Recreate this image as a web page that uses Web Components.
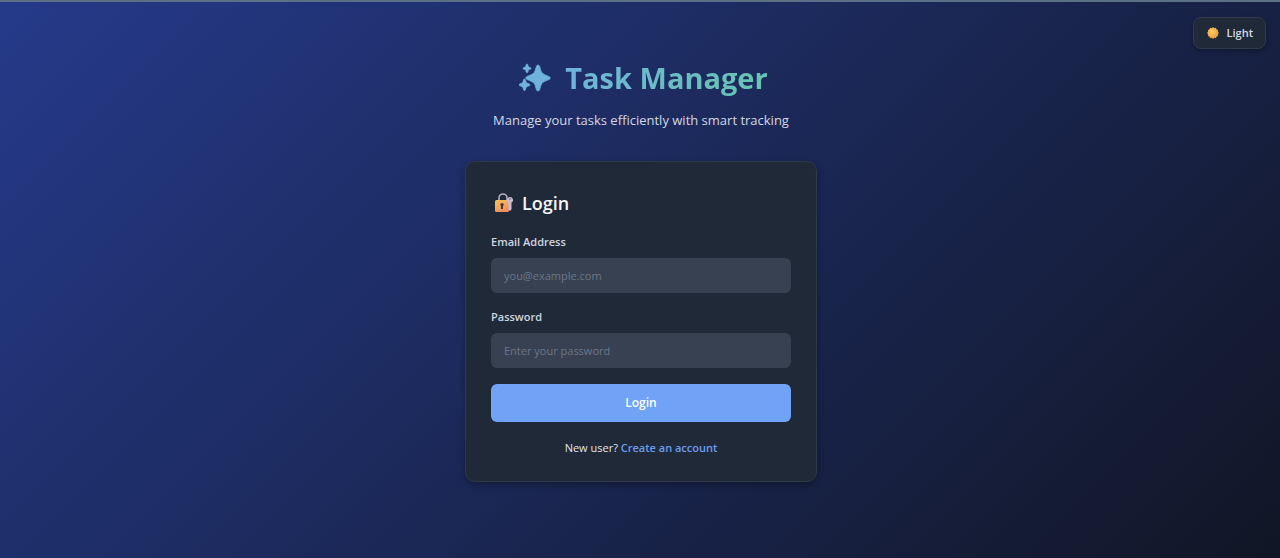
<!DOCTYPE html>
<html lang="en">
<head>
<meta charset="utf-8">
<meta name="viewport" content="width=device-width, initial-scale=1">
<title>Task Manager</title>
<style>
  body { margin: 0; font-family: "Open Sans", "Noto Sans", sans-serif; color: #e5e7eb; }
</style>
</head>
<body>
<task-app>
  <theme-toggle slot="tools">Light</theme-toggle>
  <app-header heading="Task Manager">Manage your tasks efficiently with smart tracking</app-header>
  <login-card></login-card>
</task-app>

<script>
class BaseElement extends HTMLElement {
  render(html) {
    const t = document.createElement('template');
    t.innerHTML = html;
    this.attachShadow({ mode: 'open' }).append(t.content.cloneNode(true));
  }
}

customElements.define('task-app', class extends BaseElement {
  constructor() {
    super();
    this.render(`
      <style>
        :host { display: block; box-sizing: border-box; min-height: 100vh; padding-bottom: 40px;
          border-top: 2px solid #5c7085;
          background: linear-gradient(135deg, #253a8a 0%, #111625 100%) border-box; }
        nav { display: flex; justify-content: flex-end; padding: 15px 14px 0; }
        main { display: flex; flex-direction: column; align-items: center; padding: 8px 15px 0 17px; }
      </style>
      <nav><slot name="tools"></slot></nav>
      <main><slot></slot></main>`);
  }
});

customElements.define('theme-toggle', class extends BaseElement {
  constructor() {
    super();
    this.render(`
      <style>
        :host { display: block; }
        button { display: flex; align-items: center; gap: 8px; height: 32px; padding: 0 12px 0 13px;
          box-sizing: border-box; border: 1px solid #303b4b; border-radius: 8px; background: #1f2937;
          color: #d5dbe5; font: 600 11px/16px "Open Sans", "Noto Sans", sans-serif; cursor: pointer;
          box-shadow: 0 2px 4px rgba(0,0,0,.3); }
        svg { display: block; }
      </style>
      <button type="button">
        <svg width="12" height="12" viewBox="0 0 24 24" aria-hidden="true">
          <defs><radialGradient id="sun" cx=".4" cy=".35" r=".7"><stop offset="0" stop-color="#ffcc60"/><stop offset="1" stop-color="#e39a35"/></radialGradient></defs>
          <path fill="url(#sun)" d="M12 0l2.6 2.3L18 1.6l1.1 3.3 3.3 1.1-.7 3.4L24 12l-2.3 2.6.7 3.4-3.3 1.1L18 22.4l-3.4-.7L12 24l-2.6-2.3-3.4.7-1.1-3.3L1.6 18l.7-3.4L0 12l2.3-2.6L1.6 6l3.3-1.1L6 1.6l3.4.7z"/>
        </svg>
        <span><slot></slot></span>
      </button>`);
  }
});

customElements.define('app-header', class extends BaseElement {
  constructor() {
    super();
    this.render(`
      <style>
        :host { display: block; width: 100%; max-width: 352px; text-align: center; }
        h1 { display: flex; align-items: center; justify-content: center; gap: 14px; margin: 0;
          padding-left: 5px; font-size: 29px; line-height: 42px; font-weight: 700; }
        svg { display: block; flex: none; }
        span { color: transparent; background: linear-gradient(90deg, #6fb3da, #67c5b1);
          -webkit-background-clip: text; background-clip: text; white-space: nowrap; }
        p { margin: 11px 0 0; font-size: 13px; line-height: 20px; color: #d3d8e4; white-space: nowrap; }
      </style>
      <h1>
        <svg width="32" height="30" viewBox="0 0 32 30" fill="#6fb3da" stroke="#6fb3da" stroke-width=".7" stroke-linejoin="round" aria-hidden="true">
          <path d="M19 2q1.300 0 1.700 1.500l1.300 4.500q.8 2.700 3.500 3.600l4.300 1.800q1.500.6 1.500 1.600t-1.500 1.600l-4.300 1.800q-2.700.9-3.500 3.600l-1.300 4.500q-.4 1.500-1.700 1.500t-1.700-1.500l-1.300-4.500q-.8-2.700-3.500-3.600l-4.300-1.800q-1.500-.6-1.500-1.600t1.500-1.600l4.300-1.800q2.700-.9 3.500-3.600l1.300-4.500q.4-1.500 1.700-1.500z"/>
          <path d="M8 1q.6 0 .8.700l.5 1.600q.2.700.9.900l1.300.5q.6.200.6.700t-.6.700l-1.300.5q-.7.200-.9.900l-.5 1.600q-.2.700-.8.700t-.8-.7l-.5-1.600q-.2-.7-.9-.9l-1.300-.5q-.6-.2-.6-.7t.6-.7l1.300-.5q.7-.2.9-.9l.5-1.600q.2-.7.800-.7z"/>
          <path d="M5.500 16q.7 0 .9.700l.7 2.200q.3 1 1.200 1.300l2 .7q.7.300.7.900t-.7.900l-2 .7q-.9.300-1.200 1.300l-.7 2.200q-.2.700-.9.700t-.9-.7l-.7-2.200q-.3-1-1.200-1.300l-2-.7q-.7-.3-.7-.9t.7-.9l2-.7q.9-.3 1.200-1.300l.7-2.200q.2-.7.900-.7z"/>
        </svg>
        <span></span>
      </h1>
      <p><slot></slot></p>`);
    this.shadowRoot.querySelector('span').textContent = this.getAttribute('heading');
  }
});

customElements.define('text-field', class extends BaseElement {
  constructor() {
    super();
    this.render(`
      <style>
        :host { display: block; }
        label { display: block; margin-bottom: 8px; font-size: 11px; line-height: 16px; font-weight: 600; color: #d1d5e0; }
        input { display: block; width: 100%; height: 35px; box-sizing: border-box; padding: 0 13px;
          border: 0; border-radius: 6px; background: #374151; color: #f3f4f6;
          font: 11px/16px "Open Sans", "Noto Sans", sans-serif; }
        input::placeholder { color: #6b778a; opacity: 1; }
      </style>
      <label for="control"><slot></slot></label>
      <input id="control">`);
    const input = this.shadowRoot.querySelector('input');
    input.type = this.getAttribute('type') || 'text';
    input.placeholder = this.getAttribute('placeholder') || '';
  }
});

customElements.define('login-card', class extends BaseElement {
  constructor() {
    super();
    this.render(`
      <style>
        :host { display: block; box-sizing: border-box; width: 100%; max-width: 352px; margin-top: 31px;
          padding: 25px 25px 23px; border: 1px solid #2f3a49; border-radius: 10px; background: #1f2937;
          box-shadow: 0 3px 6px rgba(0,0,0,.3); }
        h2 { display: flex; align-items: center; gap: 9px; margin: 0 0 15px; padding-left: 4px;
          font-size: 18px; line-height: 32px; font-weight: 600; color: #f5f6fa; }
        svg { display: block; }
        form { display: flex; flex-direction: column; gap: 16px; }
        button { height: 38px; border: 0; border-radius: 6px; background: #70a2f5; color: #fff;
          font: 600 12px/16px "Open Sans", "Noto Sans", sans-serif; cursor: pointer; }
        p { margin: 16px 0 0; font-size: 11px; line-height: 20px; text-align: center; color: #e2e6ee; }
        a { color: #6b9df0; font-weight: 600; text-decoration: none; }
      </style>
      <h2>
        <svg width="18" height="20" viewBox="0 0 18 20" aria-hidden="true">
          <defs><linearGradient id="lock" x1="0" y1="0" x2="0.400" y2="1"><stop offset="0" stop-color="#f9c25b"/><stop offset="1" stop-color="#ee8f60"/></linearGradient></defs>
          <path d="M4 9V5a4 4 0 0 1 8 0v4" fill="none" stroke="#b6adc0" stroke-width="1.600"/>
          <rect y="7" width="14" height="12" rx="1.500" fill="url(#lock)"/>
          <path d="M7 10a1.700 1.700 0 0 1 1 3.100V16H6v-2.900A1.700 1.700 0 0 1 7 10z" fill="#51343b"/>
          <path d="M15 4a3 3 0 0 1 1.500 5.600V16.500L15 18l-1.500-1.500V9.600A3 3 0 0 1 15 4z" fill="#c9bad6"/>
          <circle cx="15" cy="6" r=".8" fill="#675b77"/>
        </svg>
        Login
      </h2>
      <form>
        <text-field type="email" placeholder="you@example.com">Email Address</text-field>
        <text-field type="password" placeholder="Enter your password">Password</text-field>
        <button type="button">Login</button>
      </form>
      <p>New user? <a href="#register">Create an account</a></p>`);
  }
});
</script>
</body>
</html>
